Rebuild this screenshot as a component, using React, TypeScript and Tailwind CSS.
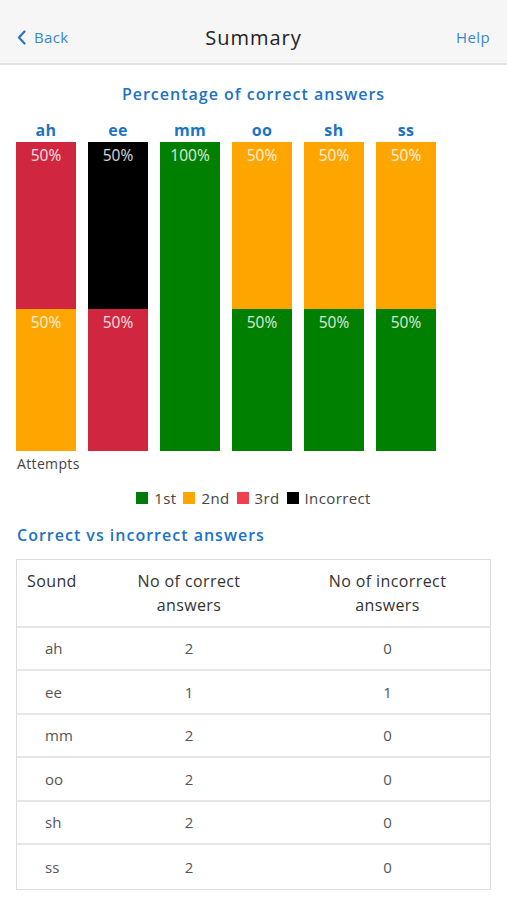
import React from 'react'

type Seg = { color: string; label: string; h: number }

const bars: { sound: string; top: Seg; bottom: Seg | null }[] = [
  { sound: 'ah', top: { color: 'bg-[#d02640]', label: '50%', h: 167 }, bottom: { color: 'bg-[#ffa500]', label: '50%', h: 142 } },
  { sound: 'ee', top: { color: 'bg-black', label: '50%', h: 167 }, bottom: { color: 'bg-[#d02640]', label: '50%', h: 142 } },
  { sound: 'mm', top: { color: 'bg-[#008000]', label: '100%', h: 309 }, bottom: null },
  { sound: 'oo', top: { color: 'bg-[#ffa500]', label: '50%', h: 167 }, bottom: { color: 'bg-[#008000]', label: '50%', h: 142 } },
  { sound: 'sh', top: { color: 'bg-[#ffa500]', label: '50%', h: 167 }, bottom: { color: 'bg-[#008000]', label: '50%', h: 142 } },
  { sound: 'ss', top: { color: 'bg-[#ffa500]', label: '50%', h: 167 }, bottom: { color: 'bg-[#008000]', label: '50%', h: 142 } },
]

const rows = [
  ['ah', 2, 0],
  ['ee', 1, 1],
  ['mm', 2, 0],
  ['oo', 2, 0],
  ['sh', 2, 0],
  ['ss', 2, 0],
]

const legend = [
  { color: 'bg-[#007a0c]', label: '1st' },
  { color: 'bg-[#ffa500]', label: '2nd' },
  { color: 'bg-[#f0404f]', label: '3rd' },
  { color: 'bg-black', label: 'Incorrect' },
]

function Segment({ seg }: { seg: Seg }) {
  return (
    <div className={`${seg.color} flex justify-center`} style={{ height: seg.h }}>
      <span className="mt-[3px] text-[15.5px] leading-5 text-white/85">{seg.label}</span>
    </div>
  )
}

export default function App() {
  return (
    <div className="w-[507px] h-[900px] bg-white overflow-hidden font-['Open_Sans',sans-serif]">
      {/* header */}
      <div className="h-[65px] bg-[#f6f6f6] border-b-2 border-[#e2e2e2] flex items-center justify-between px-[17px] pt-[12px]">
        <div className="flex items-center gap-[8px] w-20 text-[#3a86cc]">
          <svg width="9" height="15" viewBox="0 0 9 15" fill="none">
            <path d="M7.5 1.5 L2 7.5 L7.5 13.5" stroke="#2a74c0" strokeWidth="2.2" strokeLinecap="round" strokeLinejoin="round" />
          </svg>
          <span className="text-[15px] tracking-wide">Back</span>
        </div>
        <span className="text-[20px] text-[#222] tracking-wider">Summary</span>
        <span className="w-20 text-right text-[15px] text-[#3a86cc] tracking-wide">Help</span>
      </div>

      <div className="text-center mt-[17px] text-[16px] text-[#1c73c4] font-semibold tracking-[1px]">
        Percentage of correct answers
      </div>

      {/* chart */}
      <div className="flex gap-[12px] px-[16px] mt-[14px]">
        {bars.map((b) => (
          <div key={b.sound} className="w-[60px] flex flex-col">
            <div className="text-center text-[16px] leading-5 font-bold text-[#1c73c4] tracking-wide">{b.sound}</div>
            <div className="mt-[2px] flex flex-col">
              <Segment seg={b.top} />
              {b.bottom && <Segment seg={b.bottom} />}
            </div>
          </div>
        ))}
      </div>
      <div className="px-[17px] mt-[2px] text-[14px] text-[#444] tracking-wide">Attempts</div>

      <div className="flex justify-center items-center gap-[7px] mt-[13px] text-[15px] text-[#444]">
        {legend.map((l) => (
          <div key={l.label} className="flex items-center gap-[6px]">
            <span className={`w-[12px] h-[12px] ${l.color}`} />
            <span className="tracking-wide">{l.label}</span>
          </div>
        ))}
      </div>

      <div className="px-[17px] mt-[13px] text-[16px] font-semibold text-[#1c73c4] tracking-[1px]">
        Correct vs incorrect answers
      </div>

      {/* table */}
      <div className="mx-[16px] mt-[12px] border border-[#ddd]">
        <div className="h-[68px] grid grid-cols-[90px_170px_1fr] items-start pt-[9px] text-[16px] text-[#333] tracking-wide leading-6 border-b-2 border-[#e6e6e6]">
          <div className="pl-[10px]">Sound</div>
          <div className="text-center -ml-[6px]">No of correct<br />answers</div>
          <div className="text-center pl-[8px]">No of incorrect<br />answers</div>
        </div>
        {rows.map((r, i) => (
          <div
            key={r[0] as string}
            className={`h-[43.5px] grid grid-cols-[90px_170px_1fr] items-center text-[15px] text-[#555] ${i < rows.length - 1 ? 'border-b-2 border-[#e6e6e6]' : ''}`}
          >
            <div className="pl-[28px]">{r[0]}</div>
            <div className="text-center -ml-[6px]">{r[1]}</div>
            <div className="text-center pl-[8px]">{r[2]}</div>
          </div>
        ))}
      </div>
    </div>
  )
}
